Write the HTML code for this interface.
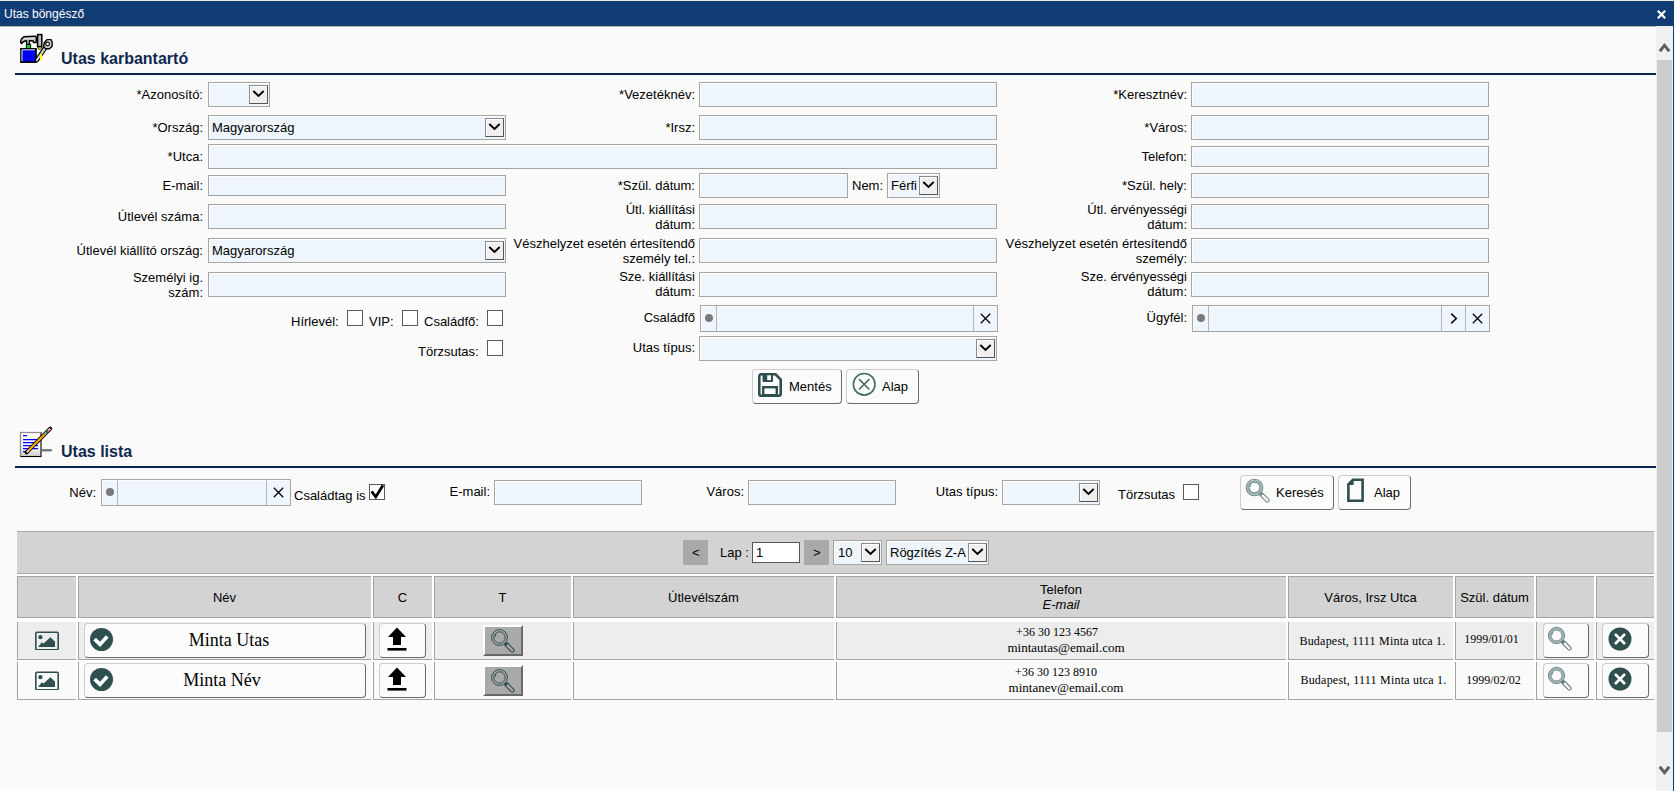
<!DOCTYPE html><html><head><meta charset="utf-8"><style>
*{margin:0;padding:0}
html,body{width:1675px;height:791px;overflow:hidden;background:#fafafa}
body{position:relative;font-family:"Liberation Sans",sans-serif;font-size:13px;color:#000}
div,svg{position:absolute}
.t{white-space:nowrap;line-height:15px}
.inp{box-sizing:border-box;border:1px solid #a6a6a0;background:#eef5fc;box-shadow:inset 1px 1px 0 #fdfdfd;line-height:15px;white-space:nowrap}
.dd{box-sizing:border-box;background:#efefef;border:1px solid;border-color:#8c8c8c #555 #555 #8c8c8c;box-shadow:inset 1px 1px 0 #fff}
.dd svg{left:0;top:0}
.lbl{display:flex;align-items:center;justify-content:flex-end;text-align:right;line-height:15px;white-space:nowrap}
.cb{box-sizing:border-box;width:16px;height:16px;border:1px solid #5a5a5a;background:#fff}
.btn{box-sizing:border-box;border:1px solid;border-color:#cdcdcd #6a6a6a #6a6a6a #cdcdcd;border-radius:4px;background:#fbfbfb}
</style></head><body>
<div style="left:0px;top:0px;width:1675px;height:1px;background:repeating-linear-gradient(90deg,#fcf9f3 0 1px,#d9d5cf 1px 2px)"></div>
<div style="left:0px;top:1px;width:1674px;height:25px;background:#113c73"></div>
<div style="left:0px;top:26px;width:1673px;height:1px;background:#b9b6aa"></div>
<div class="t" style="left:4px;top:7px;color:#fff;font-size:12px">Utas böngésző</div>
<svg style="left:1656px;top:9px" width="11" height="11" viewBox="0 0 11 11"><path d="M1.8 1.8 L9.2 9.2 M9.2 1.8 L1.8 9.2" stroke="#fff" stroke-width="2.2"/></svg>
<div style="left:1673px;top:26px;width:1px;height:765px;background:#113c73"></div>
<div style="left:1656px;top:26px;width:17px;height:765px;background:#f0f0f0"></div>
<div style="left:1657px;top:60px;width:15px;height:672px;background:#cdcdcd"></div>
<svg style="left:1658px;top:41px" width="13" height="12" viewBox="0 0 13 12"><path d="M1.8 10.2 L6.5 4.4 L11.2 10.2" fill="none" stroke="#5f5f5f" stroke-width="3"/></svg>
<svg style="left:1658px;top:765px" width="13" height="12" viewBox="0 0 13 12"><path d="M1.8 1.8 L6.5 7.6 L11.2 1.8" fill="none" stroke="#5f5f5f" stroke-width="3"/></svg>
<div class="t" style="left:61px;top:50px;font-size:16px;font-weight:bold;color:#0f2850;line-height:18px">Utas karbantartó</div>
<div style="left:15px;top:73px;width:1641px;height:2px;background:#0c2550"></div>
<svg style="left:16px;top:30px" width="40" height="36" viewBox="0 0 40 36">
<path d="M4.6 12.6 Q4.6 8.5 8 6.8 L19.5 6.2 Q20.5 6.5 20.3 8 L20.2 12.5 L17.5 12.5 L17 10.8 L13.4 10.8 L13.4 14.4 L10.6 14.4 L10.6 10.8 Q7 11 5.6 13.6 Z" fill="#c4c4c4" stroke="#000" stroke-width="1.4" stroke-linejoin="round"/>
<path d="M8.5 8.6 L18.5 8.2" stroke="#e8e8e8" stroke-width="1"/>
<rect x="10.4" y="14.4" width="4.2" height="4.1" fill="#00d800" stroke="#000" stroke-width="1"/>
<rect x="5" y="18.9" width="15" height="13.2" fill="#0000f0" stroke="#000" stroke-width="1.7"/>
<path d="M6 19.8 L19 19.8 M6 19.8 L6 31.2" stroke="#fff" stroke-width="0.9"/>
<rect x="21.6" y="4.6" width="4.2" height="12" fill="#c0c0c0" stroke="#000" stroke-width="1.5"/>
<path d="M21.6 17.2 L25.8 17.2 L25 19.2 L22.4 19.2Z" fill="#f0f000" stroke="#000" stroke-width="0.6"/>
<path d="M21 30 L29.4 17.6" stroke="#000" stroke-width="4.4" stroke-linecap="round"/>
<path d="M21 30 L29.4 17.6" stroke="#d4d4d4" stroke-width="2.2" stroke-linecap="round"/>
<path d="M28.4 12.5 L31 9.6 L35 9.6 L36.2 12.2 L36 16.4 L33.4 18.8 L29.6 18.8 L27.6 16.6 Z" fill="#d4d4d4" stroke="#000" stroke-width="1.4" stroke-linejoin="round"/>
<circle cx="31.6" cy="14" r="1.9" fill="#fff" stroke="#000" stroke-width="1.1"/>
<rect x="24" y="24" width="2" height="6.2" fill="#ffff00"/>
</svg>
<div class="lbl" style="right:1472px;top:82px;height:25px;"><span>*Azonosító:</span></div>
<div class="inp" style="left:208px;top:82px;width:62px;height:25px;"></div>
<div class="dd" style="left:249px;top:85px;width:19px;height:19px;"><svg width="17" height="17" viewBox="0 0 17 17"><path d="M3.3 5 L8.5 10 L13.7 5" fill="none" stroke="#000" stroke-width="1.9"/></svg></div>
<div class="lbl" style="right:980px;top:82px;height:25px;"><span>*Vezetéknév:</span></div>
<div class="inp" style="left:699px;top:82px;width:298px;height:25px;"></div>
<div class="lbl" style="right:488px;top:82px;height:25px;"><span>*Keresztnév:</span></div>
<div class="inp" style="left:1191px;top:82px;width:298px;height:25px;"></div>
<div class="lbl" style="right:1472px;top:115px;height:25px;"><span>*Ország:</span></div>
<div class="inp" style="left:208px;top:115px;width:298px;height:25px;"><span style="position:absolute;left:3px;top:4px">Magyarország</span></div>
<div class="dd" style="left:485px;top:118px;width:19px;height:19px;"><svg width="17" height="17" viewBox="0 0 17 17"><path d="M3.3 5 L8.5 10 L13.7 5" fill="none" stroke="#000" stroke-width="1.9"/></svg></div>
<div class="lbl" style="right:980px;top:115px;height:25px;"><span>*Irsz:</span></div>
<div class="inp" style="left:699px;top:115px;width:298px;height:25px;"></div>
<div class="lbl" style="right:488px;top:115px;height:25px;"><span>*Város:</span></div>
<div class="inp" style="left:1191px;top:115px;width:298px;height:25px;"></div>
<div class="lbl" style="right:1472px;top:144px;height:25px;"><span>*Utca:</span></div>
<div class="inp" style="left:208px;top:144px;width:789px;height:25px;"></div>
<div class="lbl" style="right:488px;top:146px;height:21px;"><span>Telefon:</span></div>
<div class="inp" style="left:1191px;top:146px;width:298px;height:21px;"></div>
<div class="lbl" style="right:1472px;top:175px;height:21px;"><span>E-mail:</span></div>
<div class="inp" style="left:208px;top:175px;width:298px;height:21px;"></div>
<div class="lbl" style="right:980px;top:173px;height:25px;"><span>*Szül. dátum:</span></div>
<div class="inp" style="left:699px;top:173px;width:149px;height:25px;"></div>
<div class="t" style="left:852px;top:178px;">Nem:</div>
<div class="inp" style="left:887px;top:173px;width:53px;height:25px;"><span style="position:absolute;left:3px;top:4px">Férfi</span></div>
<div class="dd" style="left:919px;top:176px;width:19px;height:19px;"><svg width="17" height="17" viewBox="0 0 17 17"><path d="M3.3 5 L8.5 10 L13.7 5" fill="none" stroke="#000" stroke-width="1.9"/></svg></div>
<div class="lbl" style="right:488px;top:173px;height:25px;"><span>*Szül. hely:</span></div>
<div class="inp" style="left:1191px;top:173px;width:298px;height:25px;"></div>
<div class="lbl" style="right:1472px;top:204px;height:25px;"><span>Útlevél száma:</span></div>
<div class="inp" style="left:208px;top:204px;width:298px;height:25px;"></div>
<div class="lbl" style="right:980px;top:204px;height:25px;"><span>Útl. kiállítási<br>dátum:</span></div>
<div class="inp" style="left:699px;top:204px;width:298px;height:25px;"></div>
<div class="lbl" style="right:488px;top:204px;height:25px;"><span>Útl. érvényességi<br>dátum:</span></div>
<div class="inp" style="left:1191px;top:204px;width:298px;height:25px;"></div>
<div class="lbl" style="right:1472px;top:238px;height:25px;"><span>Útlevél kiállító ország:</span></div>
<div class="inp" style="left:208px;top:238px;width:298px;height:25px;"><span style="position:absolute;left:3px;top:4px">Magyarország</span></div>
<div class="dd" style="left:485px;top:241px;width:19px;height:19px;"><svg width="17" height="17" viewBox="0 0 17 17"><path d="M3.3 5 L8.5 10 L13.7 5" fill="none" stroke="#000" stroke-width="1.9"/></svg></div>
<div class="lbl" style="right:980px;top:238px;height:25px;"><span>Vészhelyzet esetén értesítendő<br>személy tel.:</span></div>
<div class="inp" style="left:699px;top:238px;width:298px;height:25px;"></div>
<div class="lbl" style="right:488px;top:238px;height:25px;"><span>Vészhelyzet esetén értesítendő<br>személy:</span></div>
<div class="inp" style="left:1191px;top:238px;width:298px;height:25px;"></div>
<div class="lbl" style="right:1472px;top:272px;height:25px;"><span>Személyi ig.<br>szám:</span></div>
<div class="inp" style="left:208px;top:272px;width:298px;height:25px;"></div>
<div class="lbl" style="right:980px;top:271px;height:25px;"><span>Sze. kiállítási<br>dátum:</span></div>
<div class="inp" style="left:699px;top:272px;width:298px;height:25px;"></div>
<div class="lbl" style="right:488px;top:271px;height:25px;"><span>Sze. érvényességi<br>dátum:</span></div>
<div class="inp" style="left:1191px;top:272px;width:298px;height:25px;"></div>
<div class="t" style="left:291px;top:314px;">Hírlevél:</div>
<div class="cb" style="left:347px;top:310px;"></div>
<div class="t" style="left:369px;top:314px;">VIP:</div>
<div class="cb" style="left:402px;top:310px;"></div>
<div class="t" style="left:424px;top:314px;">Családfő:</div>
<div class="cb" style="left:487px;top:310px;"></div>
<div class="lbl" style="right:980px;top:304px;height:26px;"><span>Családfő</span></div>
<div class="inp" style="left:700px;top:305px;width:298px;height:27px;"></div>
<div style="left:701px;top:306px;width:16px;height:25px;border-right:1px solid #b4b4b4;box-sizing:border-box"></div>
<div style="left:704.5px;top:314.0px;width:8px;height:8px;border-radius:50%;background:#7a7a7a"></div>
<div style="left:973px;top:306px;width:24px;height:25px;border-left:1px solid #b4b4b4;box-sizing:border-box"></div>
<svg style="position:absolute;left:979px;top:312px" width="13" height="13" viewBox="0 0 13 13"><path d="M1.8 1.8 L11.2 11.2 M11.2 1.8 L1.8 11.2" stroke="#000" stroke-width="1.25"/></svg>
<div class="lbl" style="right:488px;top:304px;height:26px;"><span>Ügyfél:</span></div>
<div class="inp" style="left:1192px;top:305px;width:298px;height:27px;"></div>
<div style="left:1193px;top:306px;width:16px;height:25px;border-right:1px solid #b4b4b4;box-sizing:border-box"></div>
<div style="left:1196.5px;top:314.0px;width:8px;height:8px;border-radius:50%;background:#7a7a7a"></div>
<div style="left:1465px;top:306px;width:24px;height:25px;border-left:1px solid #b4b4b4;box-sizing:border-box"></div>
<svg style="position:absolute;left:1471px;top:312px" width="13" height="13" viewBox="0 0 13 13"><path d="M1.8 1.8 L11.2 11.2 M11.2 1.8 L1.8 11.2" stroke="#000" stroke-width="1.25"/></svg>
<div style="left:1441px;top:306px;width:24px;height:25px;border-left:1px solid #b4b4b4;box-sizing:border-box"></div>
<svg style="position:absolute;left:1449px;top:312px" width="10" height="13" viewBox="0 0 10 13"><path d="M2.2 1.6 L7.3 6.5 L2.2 11.4" fill="none" stroke="#000" stroke-width="1.5"/></svg>
<div class="t" style="left:418px;top:344px;">Törzsutas:</div>
<div class="cb" style="left:487px;top:340px;"></div>
<div class="lbl" style="right:980px;top:335px;height:25px;"><span>Utas típus:</span></div>
<div class="inp" style="left:699px;top:336px;width:298px;height:25px;"></div>
<div class="dd" style="left:976px;top:339px;width:19px;height:19px;"><svg width="17" height="17" viewBox="0 0 17 17"><path d="M3.3 5 L8.5 10 L13.7 5" fill="none" stroke="#000" stroke-width="1.9"/></svg></div>
<div class="btn" style="left:752px;top:369px;width:90px;height:35px"></div>
<div class="t" style="left:789px;top:379px;">Mentés</div>
<div class="btn" style="left:846px;top:369px;width:73px;height:35px"></div>
<div class="t" style="left:882px;top:379px;">Alap</div>
<svg style="left:15px;top:422px" width="45" height="40" viewBox="0 0 45 40"><defs><linearGradient id="pg" x1="0" y1="0" x2="0" y2="1"><stop offset="0.55" stop-color="#fdfdfd"/><stop offset="1" stop-color="#cfcfcf"/></linearGradient></defs><rect x="5.5" y="10.5" width="20.5" height="24" fill="url(#pg)" stroke="#000" stroke-width="1.1"/><path d="M5.5 34.5 L5.5 10.5 L26 10.5" fill="none" stroke="#8c8c8c" stroke-width="1.1"/><path d="M26.5 27 L36 27 L37.5 28.2 L36 29.4 L26.5 29.4 Z" fill="#7a7a7a"/><g stroke="#0000ff" stroke-width="1.15"><path d="M8 13.6 H12 M8 17.6 H22 M8 20.6 H22 M8 23.6 H23 M8 26.6 H23 M8 29.6 H11"/></g><path d="M11.6 30.4 L35.2 6.6" stroke="#000" stroke-width="4" stroke-linecap="round"/><path d="M12.6 29.4 L29.6 12.2" stroke="#f5a31a" stroke-width="2.3"/><path d="M29.6 12.2 L31.4 10.4" stroke="#a8a8a8" stroke-width="2.3"/><path d="M31.4 10.4 L32.8 9" stroke="#1a9a1a" stroke-width="2.3"/><path d="M32.8 9 L35.4 6.4" stroke="#f0a8a8" stroke-width="2.1"/><path d="M11.6 30.4 L13.6 28.4" stroke="#f3d4b0" stroke-width="1.6"/></svg>
<svg style="left:758px;top:373px" width="24" height="24" viewBox="0 0 24 24"><path d="M3 1.3 H17.5 L22.7 6.5 V21 A1.7 1.7 0 0 1 21 22.7 H3 A1.7 1.7 0 0 1 1.3 21 V3 A1.7 1.7 0 0 1 3 1.3Z" fill="none" stroke="#2f4f4f" stroke-width="2.6"/><rect x="4.5" y="1" width="10.5" height="8" rx="1" fill="#2f4f4f"/><rect x="9.2" y="2.3" width="3.8" height="4.8" fill="#fafafa"/><rect x="5.2" y="14.2" width="13.6" height="8" fill="none" stroke="#2f4f4f" stroke-width="2.4"/></svg>
<svg style="left:851px;top:372px" width="26" height="25" viewBox="0 0 26 25"><circle cx="13.2" cy="12.3" r="10.8" fill="none" stroke="#4a6a6a" stroke-width="1.6"/><path d="M8 7.1 L18.4 17.5 M18.4 7.1 L8 17.5" stroke="#4a6a6a" stroke-width="1.6"/></svg>
<div class="t" style="left:61px;top:443px;font-size:16px;font-weight:bold;color:#0f2850;line-height:18px">Utas lista</div>
<div style="left:15px;top:466px;width:1641px;height:2px;background:#0c2550"></div>
<div class="lbl" style="right:1579px;top:479px;height:27px;"><span>Név:</span></div>
<div class="inp" style="left:101px;top:479px;width:190px;height:27px;"></div>
<div style="left:102px;top:480px;width:16px;height:25px;border-right:1px solid #b4b4b4;box-sizing:border-box"></div>
<div style="left:105.5px;top:488.0px;width:8px;height:8px;border-radius:50%;background:#7a7a7a"></div>
<div style="left:266px;top:480px;width:24px;height:25px;border-left:1px solid #b4b4b4;box-sizing:border-box"></div>
<svg style="position:absolute;left:272px;top:486px" width="13" height="13" viewBox="0 0 13 13"><path d="M1.8 1.8 L11.2 11.2 M11.2 1.8 L1.8 11.2" stroke="#000" stroke-width="1.25"/></svg>
<div class="t" style="left:294px;top:488px;">Családtag is</div>
<div class="cb" style="left:369px;top:484px;"><svg width="16" height="16" viewBox="0 0 16 16" style="position:absolute;left:-1px;top:-1px"><path d="M2.6 7.4 L6.8 12.8 L14 1.2" fill="none" stroke="#000" stroke-width="2.7"/></svg></div>
<div class="lbl" style="right:1185px;top:479px;height:25px;"><span>E-mail:</span></div>
<div class="inp" style="left:494px;top:480px;width:148px;height:25px;"></div>
<div class="lbl" style="right:931px;top:479px;height:25px;"><span>Város:</span></div>
<div class="inp" style="left:748px;top:480px;width:148px;height:25px;"></div>
<div class="lbl" style="right:677px;top:479px;height:25px;"><span>Utas típus:</span></div>
<div class="inp" style="left:1002px;top:480px;width:98px;height:25px;"></div>
<div class="dd" style="left:1079px;top:483px;width:19px;height:19px;"><svg width="17" height="17" viewBox="0 0 17 17"><path d="M3.3 5 L8.5 10 L13.7 5" fill="none" stroke="#000" stroke-width="1.9"/></svg></div>
<div class="t" style="left:1118px;top:487px;">Törzsutas</div>
<div class="cb" style="left:1183px;top:484px;"></div>
<div class="btn" style="left:1240px;top:475px;width:94px;height:35px"></div>
<div class="t" style="left:1276px;top:485px;">Keresés</div>
<div class="btn" style="left:1338px;top:475px;width:73px;height:35px"></div>
<div class="t" style="left:1374px;top:485px;">Alap</div>
<div style="left:17px;top:531px;width:1637px;height:43px;background:#d3d3d3;border-top:1px solid #a9a9a0;border-bottom:1px solid #a9a9a0;box-sizing:border-box"></div>
<div style="left:683px;top:540px;width:25px;height:25px;background:#a9a9a9"></div>
<div class="t" style="left:692px;top:546px;line-height:13px">&lt;</div>
<div class="t" style="left:720px;top:545px;">Lap :</div>
<div style="left:752px;top:542px;width:48px;height:21px;box-sizing:border-box;border:1px solid #555;background:#fff"></div>
<div class="t" style="left:756px;top:545px;">1</div>
<div style="left:804px;top:540px;width:25px;height:25px;background:#a9a9a9"></div>
<div class="t" style="left:813px;top:546px;line-height:13px">&gt;</div>
<div class="inp" style="left:833px;top:540px;width:49px;height:25px;"><span style="position:absolute;left:4px;top:4px">10</span></div>
<div class="dd" style="left:861px;top:543px;width:19px;height:19px;"><svg width="17" height="17" viewBox="0 0 17 17"><path d="M3.3 5 L8.5 10 L13.7 5" fill="none" stroke="#000" stroke-width="1.9"/></svg></div>
<div class="inp" style="left:886px;top:540px;width:103px;height:25px;"><span style="position:absolute;left:3px;top:4px">Rögzítés Z-A</span></div>
<div class="dd" style="left:968px;top:543px;width:19px;height:19px;"><svg width="17" height="17" viewBox="0 0 17 17"><path d="M3.3 5 L8.5 10 L13.7 5" fill="none" stroke="#000" stroke-width="1.9"/></svg></div>
<div style="left:17px;top:574px;width:1637px;height:126px;background:#fff"></div>
<div style="left:17px;top:576px;width:59px;height:42px;background:#d3d3d3;border-top:1px solid #a4a49c;border-left:1px solid #a4a49c;border-bottom:1px solid #a4a49c;box-sizing:border-box"></div>
<div style="left:17px;top:622px;width:59px;height:38px;background:#ededed;border-left:1px solid #a4a49c;border-bottom:1px solid #a4a49c;box-sizing:border-box"></div>
<div style="left:17px;top:662px;width:59px;height:38px;background:#fafafa;border-left:1px solid #a4a49c;border-bottom:1px solid #a4a49c;box-sizing:border-box"></div>
<div style="left:78px;top:576px;width:293px;height:42px;background:#d3d3d3;border-top:1px solid #a4a49c;border-left:1px solid #a4a49c;border-bottom:1px solid #a4a49c;box-sizing:border-box"></div>
<div style="left:78px;top:622px;width:293px;height:38px;background:#ededed;border-left:1px solid #a4a49c;border-bottom:1px solid #a4a49c;box-sizing:border-box"></div>
<div style="left:78px;top:662px;width:293px;height:38px;background:#fafafa;border-left:1px solid #a4a49c;border-bottom:1px solid #a4a49c;box-sizing:border-box"></div>
<div style="left:373px;top:576px;width:59px;height:42px;background:#d3d3d3;border-top:1px solid #a4a49c;border-left:1px solid #a4a49c;border-bottom:1px solid #a4a49c;box-sizing:border-box"></div>
<div style="left:373px;top:622px;width:59px;height:38px;background:#ededed;border-left:1px solid #a4a49c;border-bottom:1px solid #a4a49c;box-sizing:border-box"></div>
<div style="left:373px;top:662px;width:59px;height:38px;background:#fafafa;border-left:1px solid #a4a49c;border-bottom:1px solid #a4a49c;box-sizing:border-box"></div>
<div style="left:434px;top:576px;width:137px;height:42px;background:#d3d3d3;border-top:1px solid #a4a49c;border-left:1px solid #a4a49c;border-bottom:1px solid #a4a49c;box-sizing:border-box"></div>
<div style="left:434px;top:622px;width:137px;height:38px;background:#ededed;border-left:1px solid #a4a49c;border-bottom:1px solid #a4a49c;box-sizing:border-box"></div>
<div style="left:434px;top:662px;width:137px;height:38px;background:#fafafa;border-left:1px solid #a4a49c;border-bottom:1px solid #a4a49c;box-sizing:border-box"></div>
<div style="left:573px;top:576px;width:261px;height:42px;background:#d3d3d3;border-top:1px solid #a4a49c;border-left:1px solid #a4a49c;border-bottom:1px solid #a4a49c;box-sizing:border-box"></div>
<div style="left:573px;top:622px;width:261px;height:38px;background:#ededed;border-left:1px solid #a4a49c;border-bottom:1px solid #a4a49c;box-sizing:border-box"></div>
<div style="left:573px;top:662px;width:261px;height:38px;background:#fafafa;border-left:1px solid #a4a49c;border-bottom:1px solid #a4a49c;box-sizing:border-box"></div>
<div style="left:836px;top:576px;width:450px;height:42px;background:#d3d3d3;border-top:1px solid #a4a49c;border-left:1px solid #a4a49c;border-bottom:1px solid #a4a49c;box-sizing:border-box"></div>
<div style="left:836px;top:622px;width:450px;height:38px;background:#ededed;border-left:1px solid #a4a49c;border-bottom:1px solid #a4a49c;box-sizing:border-box"></div>
<div style="left:836px;top:662px;width:450px;height:38px;background:#fafafa;border-left:1px solid #a4a49c;border-bottom:1px solid #a4a49c;box-sizing:border-box"></div>
<div style="left:1288px;top:576px;width:165px;height:42px;background:#d3d3d3;border-top:1px solid #a4a49c;border-left:1px solid #a4a49c;border-bottom:1px solid #a4a49c;box-sizing:border-box"></div>
<div style="left:1288px;top:622px;width:165px;height:38px;background:#ededed;border-left:1px solid #a4a49c;border-bottom:1px solid #a4a49c;box-sizing:border-box"></div>
<div style="left:1288px;top:662px;width:165px;height:38px;background:#fafafa;border-left:1px solid #a4a49c;border-bottom:1px solid #a4a49c;box-sizing:border-box"></div>
<div style="left:1455px;top:576px;width:79px;height:42px;background:#d3d3d3;border-top:1px solid #a4a49c;border-left:1px solid #a4a49c;border-bottom:1px solid #a4a49c;box-sizing:border-box"></div>
<div style="left:1455px;top:622px;width:79px;height:38px;background:#ededed;border-left:1px solid #a4a49c;border-bottom:1px solid #a4a49c;box-sizing:border-box"></div>
<div style="left:1455px;top:662px;width:79px;height:38px;background:#fafafa;border-left:1px solid #a4a49c;border-bottom:1px solid #a4a49c;box-sizing:border-box"></div>
<div style="left:1536px;top:576px;width:58px;height:42px;background:#d3d3d3;border-top:1px solid #a4a49c;border-left:1px solid #a4a49c;border-bottom:1px solid #a4a49c;box-sizing:border-box"></div>
<div style="left:1536px;top:622px;width:58px;height:38px;background:#ededed;border-left:1px solid #a4a49c;border-bottom:1px solid #a4a49c;box-sizing:border-box"></div>
<div style="left:1536px;top:662px;width:58px;height:38px;background:#fafafa;border-left:1px solid #a4a49c;border-bottom:1px solid #a4a49c;box-sizing:border-box"></div>
<div style="left:1596px;top:576px;width:58px;height:42px;background:#d3d3d3;border-top:1px solid #a4a49c;border-left:1px solid #a4a49c;border-bottom:1px solid #a4a49c;box-sizing:border-box"></div>
<div style="left:1596px;top:622px;width:58px;height:38px;background:#ededed;border-left:1px solid #a4a49c;border-bottom:1px solid #a4a49c;box-sizing:border-box"></div>
<div style="left:1596px;top:662px;width:58px;height:38px;background:#fafafa;border-left:1px solid #a4a49c;border-bottom:1px solid #a4a49c;box-sizing:border-box"></div>
<div class="t" style="left:78px;top:590px;width:293px;text-align:center">Név</div>
<div class="t" style="left:373px;top:590px;width:59px;text-align:center">C</div>
<div class="t" style="left:434px;top:590px;width:137px;text-align:center">T</div>
<div class="t" style="left:573px;top:590px;width:261px;text-align:center">Útlevélszám</div>
<div class="t" style="left:836px;top:582px;width:450px;text-align:center">Telefon<br><i>E-mail</i></div>
<div class="t" style="left:1288px;top:590px;width:165px;text-align:center">Város, Irsz Utca</div>
<div class="t" style="left:1455px;top:590px;width:79px;text-align:center">Szül. dátum</div>
<svg style="left:35px;top:631px" width="24" height="19" viewBox="0 0 24 19"><rect x="0.8" y="1.3" width="22.4" height="17.6" rx="1.3" fill="none" stroke="#2f4f4f" stroke-width="1.6"/><circle cx="5.4" cy="6.2" r="2.1" fill="#2f4f4f"/><path d="M3.1 16 L6.8 11.2 L8.5 12.4 L15.4 6.2 L20 10.8 L20 16 Z" fill="#2f4f4f"/></svg>
<div class="btn" style="left:84px;top:623px;width:282px;height:35px"></div>
<svg style="left:90px;top:628px" width="23" height="23" viewBox="0 0 23 23"><circle cx="11.5" cy="11.5" r="11.5" fill="#2f4f4f"/><path d="M4.6 11.2 L10 16.4 L17.2 8.4" fill="none" stroke="#fff" stroke-width="3.7"/></svg>
<div class="t" style="left:112px;top:630px;width:234px;text-align:center;font-family:'Liberation Serif',serif;font-size:18px;line-height:20px">Minta Utas</div>
<div class="btn" style="left:379px;top:623px;width:47px;height:35px"></div>
<svg style="left:387px;top:627px" width="20" height="24" viewBox="0 0 20 24"><path d="M1 10 L10 0.5 L19 10 L14 10 L14 18 L6 18 L6 10Z" fill="#000"/><rect x="0.5" y="21" width="19" height="2.6" fill="#000"/></svg>
<div style="left:483px;top:625px;width:40px;height:31px;box-sizing:border-box;background:#a9a9a9;border:2px solid;border-color:#fff #696969 #696969 #fff"></div>
<svg style="left:489px;top:627px" width="28" height="28" viewBox="0 0 28 28"><g fill="none" stroke="#2f4f4f" stroke-width="1.0"><circle cx="10.5" cy="10.5" r="7.9"/><circle cx="10.5" cy="10.5" r="5.7"/><path d="M7.2 6.8 A4.2 4.2 0 0 0 6.2 9.8" stroke-width="0.9"/></g><path d="M17.6 17.6 L23.4 23.4" stroke="#2f4f4f" stroke-width="4.6" stroke-linecap="round"/><path d="M18.6 18.6 L23.4 23.4" stroke="#a9a9a9" stroke-width="2.4" stroke-linecap="round"/><path d="M15.2 17 L17 15.2 L18.8 17 L17 18.8 Z" fill="#2f4f4f"/></svg>
<div class="t" style="left:832px;top:625px;width:450px;text-align:center;font-family:'Liberation Serif',serif;font-size:12px;line-height:15px">+36 30 123 4567</div>
<div class="t" style="left:841px;top:640px;width:450px;text-align:center;font-family:'Liberation Serif',serif;font-size:13px;line-height:15px">mintautas@email.com</div>
<div class="t" style="left:1290px;top:634px;width:165px;text-align:center;font-family:'Liberation Serif',serif;font-size:12px;line-height:15px;letter-spacing:0.22px">Budapest, 1111 Minta utca 1.</div>
<div class="t" style="left:1452px;top:632px;width:79px;text-align:center;font-family:'Liberation Serif',serif;font-size:12px;line-height:15px">1999/01/01</div>
<div class="btn" style="left:1543px;top:623px;width:46px;height:35px"></div>
<svg style="left:1546px;top:625px" width="28" height="28" viewBox="0 0 28 28"><circle cx="10.5" cy="10.5" r="6.8" fill="none" stroke="#98acac" stroke-width="1.6"/><g fill="none" stroke="#5f7d7d" stroke-width="1.0"><circle cx="10.5" cy="10.5" r="8.1"/><circle cx="10.5" cy="10.5" r="5.5"/><path d="M7.2 6.8 A4.2 4.2 0 0 0 6.2 9.8" stroke-width="0.9"/></g><path d="M17.6 17.6 L23.4 23.4" stroke="#5f7d7d" stroke-width="4.6" stroke-linecap="round"/><path d="M18.6 18.6 L23.4 23.4" stroke="#fbfbfb" stroke-width="2.4" stroke-linecap="round"/><path d="M15.2 17 L17 15.2 L18.8 17 L17 18.8 Z" fill="#5f7d7d"/></svg>
<div class="btn" style="left:1602px;top:623px;width:47px;height:35px"></div>
<svg style="left:1608px;top:627px" width="24" height="24" viewBox="0 0 24 24"><circle cx="12" cy="12" r="11.5" fill="#2f4f4f"/><path d="M7 7 L17 17 M17 7 L7 17" stroke="#fff" stroke-width="2.6"/></svg>
<svg style="left:35px;top:671px" width="24" height="19" viewBox="0 0 24 19"><rect x="0.8" y="1.3" width="22.4" height="17.6" rx="1.3" fill="none" stroke="#2f4f4f" stroke-width="1.6"/><circle cx="5.4" cy="6.2" r="2.1" fill="#2f4f4f"/><path d="M3.1 16 L6.8 11.2 L8.5 12.4 L15.4 6.2 L20 10.8 L20 16 Z" fill="#2f4f4f"/></svg>
<div class="btn" style="left:84px;top:663px;width:282px;height:35px"></div>
<svg style="left:90px;top:668px" width="23" height="23" viewBox="0 0 23 23"><circle cx="11.5" cy="11.5" r="11.5" fill="#2f4f4f"/><path d="M4.6 11.2 L10 16.4 L17.2 8.4" fill="none" stroke="#fff" stroke-width="3.7"/></svg>
<div class="t" style="left:105px;top:670px;width:234px;text-align:center;font-family:'Liberation Serif',serif;font-size:18px;line-height:20px">Minta Név</div>
<div class="btn" style="left:379px;top:663px;width:47px;height:35px"></div>
<svg style="left:387px;top:667px" width="20" height="24" viewBox="0 0 20 24"><path d="M1 10 L10 0.5 L19 10 L14 10 L14 18 L6 18 L6 10Z" fill="#000"/><rect x="0.5" y="21" width="19" height="2.6" fill="#000"/></svg>
<div style="left:483px;top:665px;width:40px;height:31px;box-sizing:border-box;background:#a9a9a9;border:2px solid;border-color:#fff #696969 #696969 #fff"></div>
<svg style="left:489px;top:667px" width="28" height="28" viewBox="0 0 28 28"><g fill="none" stroke="#2f4f4f" stroke-width="1.0"><circle cx="10.5" cy="10.5" r="7.9"/><circle cx="10.5" cy="10.5" r="5.7"/><path d="M7.2 6.8 A4.2 4.2 0 0 0 6.2 9.8" stroke-width="0.9"/></g><path d="M17.6 17.6 L23.4 23.4" stroke="#2f4f4f" stroke-width="4.6" stroke-linecap="round"/><path d="M18.6 18.6 L23.4 23.4" stroke="#a9a9a9" stroke-width="2.4" stroke-linecap="round"/><path d="M15.2 17 L17 15.2 L18.8 17 L17 18.8 Z" fill="#2f4f4f"/></svg>
<div class="t" style="left:831px;top:665px;width:450px;text-align:center;font-family:'Liberation Serif',serif;font-size:12px;line-height:15px">+36 30 123 8910</div>
<div class="t" style="left:841px;top:680px;width:450px;text-align:center;font-family:'Liberation Serif',serif;font-size:13px;line-height:15px">mintanev@email.com</div>
<div class="t" style="left:1291px;top:673px;width:165px;text-align:center;font-family:'Liberation Serif',serif;font-size:12px;line-height:15px;letter-spacing:0.22px">Budapest, 1111 Minta utca 1.</div>
<div class="t" style="left:1454px;top:673px;width:79px;text-align:center;font-family:'Liberation Serif',serif;font-size:12px;line-height:15px">1999/02/02</div>
<div class="btn" style="left:1543px;top:663px;width:46px;height:35px"></div>
<svg style="left:1546px;top:665px" width="28" height="28" viewBox="0 0 28 28"><circle cx="10.5" cy="10.5" r="6.8" fill="none" stroke="#98acac" stroke-width="1.6"/><g fill="none" stroke="#5f7d7d" stroke-width="1.0"><circle cx="10.5" cy="10.5" r="8.1"/><circle cx="10.5" cy="10.5" r="5.5"/><path d="M7.2 6.8 A4.2 4.2 0 0 0 6.2 9.8" stroke-width="0.9"/></g><path d="M17.6 17.6 L23.4 23.4" stroke="#5f7d7d" stroke-width="4.6" stroke-linecap="round"/><path d="M18.6 18.6 L23.4 23.4" stroke="#fbfbfb" stroke-width="2.4" stroke-linecap="round"/><path d="M15.2 17 L17 15.2 L18.8 17 L17 18.8 Z" fill="#5f7d7d"/></svg>
<div class="btn" style="left:1602px;top:663px;width:47px;height:35px"></div>
<svg style="left:1608px;top:667px" width="24" height="24" viewBox="0 0 24 24"><circle cx="12" cy="12" r="11.5" fill="#2f4f4f"/><path d="M7 7 L17 17 M17 7 L7 17" stroke="#fff" stroke-width="2.6"/></svg>
<svg style="left:1244px;top:477px" width="28" height="28" viewBox="0 0 28 28"><circle cx="10.5" cy="10.5" r="6.8" fill="none" stroke="#98acac" stroke-width="1.6"/><g fill="none" stroke="#6f8a8a" stroke-width="1.1"><circle cx="10.5" cy="10.5" r="8.3"/><circle cx="10.5" cy="10.5" r="5.4"/><path d="M7.2 6.8 A4.2 4.2 0 0 0 6.2 9.8" stroke-width="0.9"/></g><path d="M17.6 17.6 L23.4 23.4" stroke="#6f8a8a" stroke-width="4.6" stroke-linecap="round"/><path d="M18.6 18.6 L23.4 23.4" stroke="#fbfbfb" stroke-width="2.4" stroke-linecap="round"/><path d="M15.2 17 L17 15.2 L18.8 17 L17 18.8 Z" fill="#6f8a8a"/></svg>
<svg style="left:1346px;top:478px" width="19" height="25" viewBox="0 0 19 25"><path d="M7 1.8 H16.6 V22.8 H2.4 V6.4 Z" fill="none" stroke="#2f4f4f" stroke-width="2.6" stroke-linejoin="miter"/><path d="M1.2 7 L7.6 1 L7.6 7 Z" fill="#2f4f4f"/></svg>
</body></html>
